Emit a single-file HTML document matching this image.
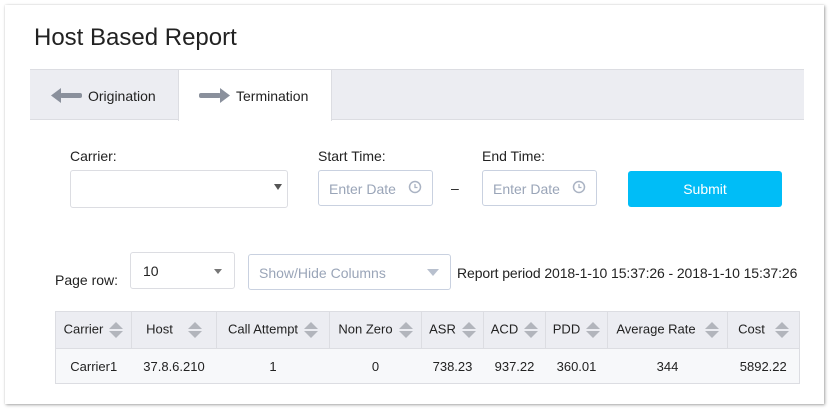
<!DOCTYPE html>
<html><head><style>
*{box-sizing:border-box;margin:0;padding:0}
body{width:830px;height:410px;background:#fff;font-family:"Liberation Sans",sans-serif;position:relative;overflow:hidden;color:#222}
.card{position:absolute;left:5px;top:5px;width:819px;height:399px;background:#fff;box-shadow:1px 1px 3px rgba(0,0,0,.35),0 0 1px rgba(0,0,0,.15)}
.a{position:absolute}
h1{position:absolute;left:34px;top:24px;font-size:24px;font-weight:normal;color:#222}
.tabs{left:30px;top:69px;width:774px;height:51px;background:#ecedf2;border-top:1px solid #dcdde2;border-bottom:1px solid #dcdde2}
.tab2{left:178px;top:69px;width:154px;height:52px;background:#fff;border-left:1px solid #dcdde2;border-right:1px solid #dcdde2;border-top:1px solid #dcdde2}
.t{font-size:14px}
.lbl{font-size:14px;color:#222}
.inp{border:1px solid #c9d1e0;border-radius:3px;background:#fff}
.ph{color:#9aa5b8;font-size:14px}
table{position:absolute;left:55px;top:311px;width:744px;table-layout:fixed;border-collapse:collapse;font-size:13px;border:1px solid #dcdde2}
th{background:#ecedf2;font-weight:normal;height:37px;border-right:1px solid #dcdde2;border-bottom:1px solid #dcdde2;text-align:center;padding:0;white-space:nowrap}
td{background:#f7f8fa;height:35px;text-align:center;border-bottom:1px solid #dcdde2}
.s{display:inline-block;vertical-align:middle;margin-left:6px;width:14px;height:18px;position:relative}
.s:before{content:"";position:absolute;left:0;top:1px;border-left:7px solid transparent;border-right:7px solid transparent;border-bottom:7px solid #b2b5bc}
.s:after{content:"";position:absolute;left:0;top:10px;border-left:7px solid transparent;border-right:7px solid transparent;border-top:7px solid #b2b5bc}
</style></head><body>
<div class="card"></div>
<h1>Host Based Report</h1>
<div class="a tabs"></div>
<div class="a tab2"></div>
<svg class="a" style="left:50px;top:86px" width="34" height="20"><rect x="10" y="7" width="22" height="5" rx="2" fill="#8a909c"/><path d="M1 9.5 L11 2 L11 17 Z" fill="#8a909c"/></svg>
<div class="a t" style="left:88px;top:88px">Origination</div>
<svg class="a" style="left:198px;top:86px" width="34" height="20"><rect x="1" y="7" width="22" height="5" rx="2" fill="#8a909c"/><path d="M32 9.5 L22 2 L22 17 Z" fill="#8a909c"/></svg>
<div class="a t" style="left:236px;top:88px">Termination</div>

<div class="a lbl" style="left:70px;top:148px">Carrier:</div>
<div class="a inp" style="left:70px;top:170px;width:218px;height:38px;border-color:#dcdde2"></div>
<div class="a" style="left:274px;top:184px;border-left:4px solid transparent;border-right:4px solid transparent;border-top:6px solid #555"></div>
<div class="a lbl" style="left:318px;top:148px">Start Time:</div>
<div class="a inp" style="left:318px;top:170px;width:115px;height:36px"></div>
<div class="a ph" style="left:329px;top:181px">Enter Date</div>
<svg class="a" style="left:408px;top:180px" width="14" height="14"><circle cx="7" cy="7" r="5.5" fill="none" stroke="#aab3c3" stroke-width="1.5"/><path d="M7 4V7.5H9.5" fill="none" stroke="#aab3c3" stroke-width="1.3"/></svg>
<div class="a" style="left:451px;top:180px;font-size:14px">–</div>
<div class="a lbl" style="left:482px;top:148px">End Time:</div>
<div class="a inp" style="left:482px;top:170px;width:115px;height:36px"></div>
<div class="a ph" style="left:493px;top:181px">Enter Date</div>
<svg class="a" style="left:572px;top:180px" width="14" height="14"><circle cx="7" cy="7" r="5.5" fill="none" stroke="#aab3c3" stroke-width="1.5"/><path d="M7 4V7.5H9.5" fill="none" stroke="#aab3c3" stroke-width="1.3"/></svg>
<div class="a" style="left:628px;top:171px;width:154px;height:36px;background:#00bdf7;border-radius:3px;color:#fff;font-size:14px;text-align:center;line-height:36px">Submit</div>

<div class="a lbl" style="left:55px;top:272px">Page row:</div>
<div class="a inp" style="left:130px;top:252px;width:105px;height:37px;border-color:#dcdde2"></div>
<div class="a" style="left:143px;top:263px;font-size:14px">10</div>
<div class="a" style="left:214px;top:269px;border-left:4px solid transparent;border-right:4px solid transparent;border-top:5px solid #777"></div>
<div class="a inp" style="left:248px;top:254px;width:203px;height:36px"></div>
<div class="a ph" style="left:259px;top:265px">Show/Hide Columns</div>
<div class="a" style="left:427px;top:269px;border-left:6px solid transparent;border-right:6px solid transparent;border-top:7px solid #b8c0ce"></div>
<div class="a" style="left:457px;top:265px;font-size:14px;letter-spacing:-0.1px">Report period 2018-1-10 15:37:26 - 2018-1-10 15:37:26</div>

<table>
<colgroup><col style="width:76px"><col style="width:85px"><col style="width:113px"><col style="width:92px"><col style="width:62px"><col style="width:62px"><col style="width:62px"><col style="width:120px"><col style="width:72px"></colgroup>
<tr><th>Carrier<span class="s"></span></th><th>Host<span class="s" style="margin-left:15px"></span></th><th>Call Attempt<span class="s"></span></th><th>Non Zero<span class="s"></span></th><th>ASR<span class="s"></span></th><th>ACD<span class="s"></span></th><th>PDD<span class="s"></span></th><th>Average Rate<span class="s" style="margin-left:9px"></span></th><th style="border-right:none">Cost<span class="s" style="margin-left:10px"></span></th></tr>
<tr><td>Carrier1</td><td>37.8.6.210</td><td>1</td><td>0</td><td>738.23</td><td>937.22</td><td>360.01</td><td>344</td><td>5892.22</td></tr>
</table>
</body></html>
